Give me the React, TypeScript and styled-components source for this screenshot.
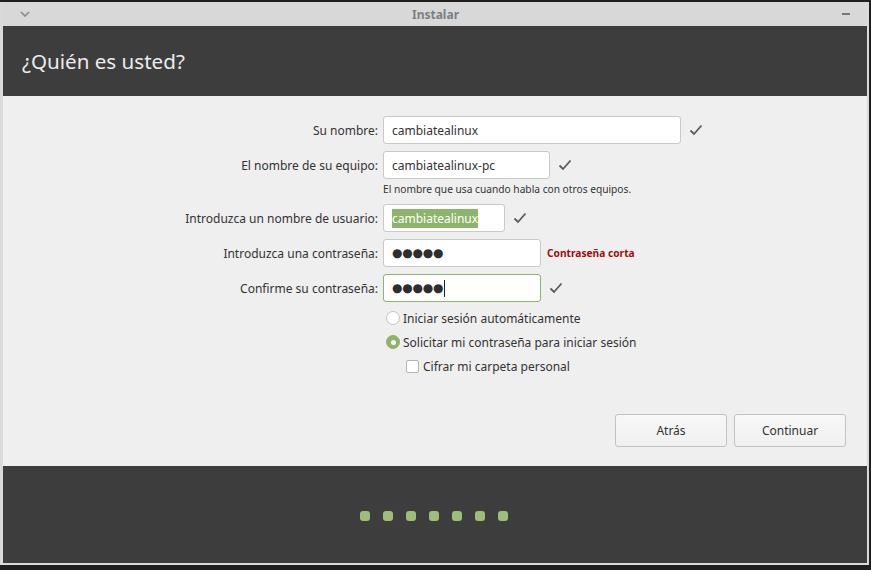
import styled, { createGlobalStyle } from "styled-components";

const Global = createGlobalStyle`
    html, body {
        margin: 0;
        padding: 0;
        background: #1f1f1f;
        font-family: "Noto Sans", "DejaVu Sans", sans-serif;
        overflow: hidden;
    }
`;

const Window = styled.div`
    margin-top: 2px;
    width: 864px;
    height: 561px;
    border-left: 3px solid #dadada;
    border-right: 2px solid #dadada;
    border-bottom: 2px solid #dadada;
    display: flex;
    flex-direction: column;
    background: #efefef;
`;

const TitleBar = styled.div`
    height: 24px;
    flex: none;
    background: #d8d8d8;
    display: flex;
    align-items: center;
    justify-content: space-between;
    padding: 0 14px 0 15px;
    color: #7b7f86;
    font-size: 12px;
    font-weight: bold;
`;

const BarIcon = styled.div`
    width: 14px;
    display: flex;
    justify-content: center;
`;

const Header = styled.div`
    height: 70px;
    flex: none;
    background: #3d3d3d;
    display: flex;
    align-items: center;
    padding-left: 19px;
    color: #ececec;
    font-size: 20.6px;
`;

const Content = styled.div`
    flex: 1;
    display: flex;
    flex-direction: column;
    padding: 20px 21px 19px 0;
`;

const Form = styled.div`
    display: grid;
    grid-template-columns: 375px auto;
    column-gap: 5px;
    row-gap: 7px;
    align-items: center;
`;

const Label = styled.div`
    text-align: right;
    font-size: 12px;
    color: #333;
`;

const Field = styled.div`
    display: flex;
    align-items: center;
    gap: 8px;
`;

const Input = styled.div<{ $w: number; $focus?: boolean }>`
    width: ${(p) => p.$w}px;
    height: 26px;
    box-sizing: content-box;
    border: 1px solid ${(p) => (p.$focus ? "#8fb56b" : "#c9c9c9")};
    border-radius: 3px;
    background: #fff;
    display: flex;
    align-items: center;
    padding-left: 8px;
    font-size: 12px;
    color: #333;
`;

const Selected = styled.span`
    background: #8cb46a;
    color: #fff;
    line-height: 19px;
`;

const Dots = styled.span`
    font-family: "DejaVu Sans", sans-serif;
    font-size: 12px;
    color: #2e2e2e;
    letter-spacing: -0.2px;
`;

const Caret = styled.span`
    display: inline-block;
    width: 1px;
    height: 17px;
    background: #222;
    margin-left: 1px;
`;

const Hint = styled.div`
    font-size: 10.2px;
    color: #333;
    margin-top: -4px;
    margin-bottom: 1px;
`;

const Warning = styled.span`
    font-size: 10.2px;
    font-weight: bold;
    color: #a30c0c;
    margin-left: -2px;
`;

const Options = styled.div`
    margin-top: 8px;
    margin-left: 383px;
    display: flex;
    flex-direction: column;
    gap: 8px;
`;

const Option = styled.label<{ $indent?: boolean }>`
    display: flex;
    align-items: center;
    gap: 3px;
    font-size: 12px;
    color: #333;
    height: 16px;
    margin-left: ${(p) => (p.$indent ? "20px" : "0")};
`;

const Radio = styled.span<{ $on?: boolean }>`
    width: 14px;
    height: 14px;
    box-sizing: border-box;
    border-radius: 50%;
    border: 1px solid ${(p) => (p.$on ? "#8cb46a" : "#c4c4c4")};
    background: ${(p) => (p.$on ? "#8fb56b" : "#fff")};
    display: flex;
    align-items: center;
    justify-content: center;
    &::after {
        content: "";
        display: ${(p) => (p.$on ? "block" : "none")};
        width: 5px;
        height: 5px;
        border-radius: 50%;
        background: #fff;
    }
`;

const Checkbox = styled.span`
    width: 13px;
    height: 13px;
    box-sizing: border-box;
    border: 1px solid #b4b4b4;
    border-radius: 2px;
    background: #fff;
    margin-right: 1px;
`;

const Actions = styled.div`
    margin-top: auto;
    display: flex;
    justify-content: flex-end;
    gap: 7px;
`;

const Button = styled.button`
    width: 112px;
    height: 33px;
    border: 1px solid #c2c2c2;
    border-radius: 3px;
    background: linear-gradient(#f7f7f7, #f0f0f0);
    font-family: "Noto Sans", sans-serif;
    font-size: 12px;
    color: #333;
`;

const Footer = styled.div`
    height: 97px;
    flex: none;
    background: #3d3d3d;
    display: flex;
    justify-content: center;
    padding-top: 45px;
    box-sizing: border-box;
    gap: 13px;
    padding-right: 2px;
`;

const Dot = styled.span`
    width: 10px;
    height: 10px;
    border-radius: 3px;
    background: #9bbf78;
`;

const Check = () => (
    <svg width="14" height="12" viewBox="0 0 14 12">
        <path d="M1.5 6.5 L5 10 L12.5 1.5" fill="none" stroke="#5a5a5a" strokeWidth="1.8" />
    </svg>
);

const App = () => {
    return (
        <>
            <Global />
            <Window>
                <TitleBar>
                    <BarIcon>
                        <svg width="10" height="6" viewBox="0 0 10 6">
                            <path d="M1 1 L5 5 L9 1" fill="none" stroke="#8a8a8a" strokeWidth="1.6" />
                        </svg>
                    </BarIcon>
                    <span>Instalar</span>
                    <BarIcon>
                        <svg width="8" height="4" viewBox="0 0 8 4">
                            <rect x="0" y="1" width="8" height="2" fill="#777" />
                        </svg>
                    </BarIcon>
                </TitleBar>
                <Header>¿Quién es usted?</Header>
                <Content>
                    <Form>
                        <Label>Su nombre:</Label>
                        <Field>
                            <Input $w={288}>cambiatealinux</Input>
                            <Check />
                        </Field>
                        <Label>El nombre de su equipo:</Label>
                        <Field>
                            <Input $w={157}>cambiatealinux-pc</Input>
                            <Check />
                        </Field>
                        <span />
                        <Hint>El nombre que usa cuando habla con otros equipos.</Hint>
                        <Label>Introduzca un nombre de usuario:</Label>
                        <Field>
                            <Input $w={112}>
                                <Selected>cambiatealinux</Selected>
                            </Input>
                            <Check />
                        </Field>
                        <Label>Introduzca una contraseña:</Label>
                        <Field>
                            <Input $w={148}>
                                <Dots>●●●●●</Dots>
                            </Input>
                            <Warning>Contraseña corta</Warning>
                        </Field>
                        <Label>Confirme su contraseña:</Label>
                        <Field>
                            <Input $w={148} $focus>
                                <Dots>●●●●●</Dots>
                                <Caret />
                            </Input>
                            <Check />
                        </Field>
                    </Form>
                    <Options>
                        <Option>
                            <Radio />
                            Iniciar sesión automáticamente
                        </Option>
                        <Option>
                            <Radio $on />
                            Solicitar mi contraseña para iniciar sesión
                        </Option>
                        <Option $indent>
                            <Checkbox />
                            Cifrar mi carpeta personal
                        </Option>
                    </Options>
                    <Actions>
                        <Button>Atrás</Button>
                        <Button>Continuar</Button>
                    </Actions>
                </Content>
                <Footer>
                    {Array.from({ length: 7 }).map((_, i) => (
                        <Dot key={i} />
                    ))}
                </Footer>
            </Window>
        </>
    );
};

export default App;
